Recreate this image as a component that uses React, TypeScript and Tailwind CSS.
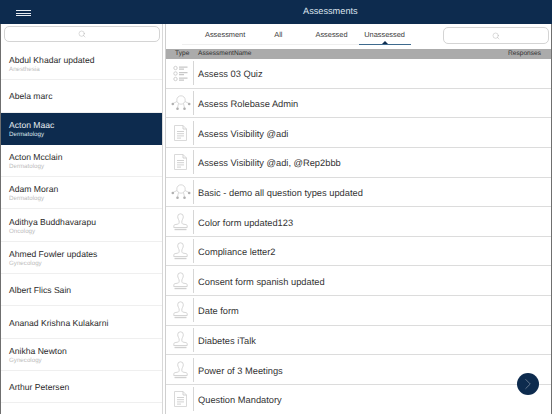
import { Search, ChevronRight } from 'lucide-react';

const people = [
  { name: 'Abdul Khadar updated', dept: 'Anesthesia' },
  { name: 'Abela marc' },
  { name: 'Acton Maac', dept: 'Dermatology', active: true },
  { name: 'Acton Mcclain', dept: 'Dermatology' },
  { name: 'Adam Moran', dept: 'Dermatology' },
  { name: 'Adithya Buddhavarapu', dept: 'Oncology' },
  { name: 'Ahmed Fowler updates', dept: 'Gynecology' },
  { name: 'Albert Flics Sain' },
  { name: 'Ananad Krishna Kulakarni' },
  { name: 'Anikha Newton', dept: 'Gynecology' },
  { name: 'Arthur Petersen' },
];

type Kind = 'quiz' | 'flow' | 'doc' | 'stamp';

const rows: { name: string; kind: Kind }[] = [
  { name: 'Assess 03 Quiz', kind: 'quiz' },
  { name: 'Assess Rolebase Admin', kind: 'flow' },
  { name: 'Assess Visibility @adi', kind: 'doc' },
  { name: 'Assess Visibility @adi, @Rep2bbb', kind: 'doc' },
  { name: 'Basic - demo all question types updated', kind: 'flow' },
  { name: 'Color form updated123', kind: 'stamp' },
  { name: 'Compliance letter2', kind: 'stamp' },
  { name: 'Consent form spanish updated', kind: 'stamp' },
  { name: 'Date form', kind: 'stamp' },
  { name: 'Diabetes iTalk', kind: 'stamp' },
  { name: 'Power of 3 Meetings', kind: 'stamp' },
  { name: 'Question Mandatory', kind: 'doc' },
];

function TypeIcon({ kind }: { kind: Kind }) {
  if (kind === 'quiz') {
    return (
      <svg width="15" height="17" viewBox="0 0 15 17" fill="none" stroke="#cfcfcf" strokeWidth="1">
        <circle cx="2.500" cy="3" r="1.700" />
        <circle cx="2.500" cy="8.500" r="1.700" />
        <circle cx="2.500" cy="14" r="1.700" />
        <path d="M6 2.200h8.500M6 4.200h5M6 7.700h8.500M6 9.700h5M6 13.200h8.500M6 15.200h5" strokeWidth="1.300" stroke="#c8c8c8" />
      </svg>
    );
  }
  if (kind === 'flow') {
    return (
      <svg width="20" height="16" viewBox="0 0 20 16" fill="none" stroke="#cfcfcf" strokeWidth="0.8">
        <circle cx="10" cy="5" r="4.200" />
        <path d="M6 6.500 2 8.500M14 6.500l4 2M7.500 8.500 6.500 13M12.500 8.500l1 4.500" />
        <circle cx="1.800" cy="9" r="1.300" fill="#b0b0b0" stroke="none" />
        <circle cx="18.200" cy="9" r="1.300" fill="#b0b0b0" stroke="none" />
        <circle cx="6.500" cy="13.700" r="1.300" fill="#b0b0b0" stroke="none" />
        <circle cx="13.500" cy="13.700" r="1.300" fill="#b0b0b0" stroke="none" />
      </svg>
    );
  }
  if (kind === 'doc') {
    return (
      <svg width="13" height="16" viewBox="0 0 13 16" fill="none" stroke="#d6d6d6" strokeWidth="0.9">
        <path d="M.5.500h8.500l3.500 3.500v11.500H.500z" />
        <path d="M9 .500V4h3.500M3 6.500h7M3 8.700h7M3 10.900h7M3 13.100h4" stroke="#cdcdcd" />
      </svg>
    );
  }
  return (
    <svg width="15" height="18" viewBox="0 0 15 18" fill="none" stroke="#d0d0d0" strokeWidth="0.9">
      <path d="M7.500.800a2.800 2.800 0 0 0-2.800 2.800c0 2.300 1.500 3.200 1.500 5.400 0 1.300-.4 1.900-1.300 2.100l-2.800.500c-1 .2-1.300.7-1.300 1.500v1.400h13.400v-1.400c0-.8-.3-1.300-1.300-1.500l-2.800-.500c-.9-.2-1.300-.8-1.300-2.100 0-2.200 1.500-3.100 1.500-5.400a2.800 2.800 0 0 0-2.800-2.800z" />
      <path d="M1.500 16.500h12" strokeWidth="1.400" />
    </svg>
  );
}

function SearchBox({ className }: { className: string }) {
  return (
    <div className={`flex items-center justify-center rounded-[5px] border border-[#d4d4d4] bg-white ${className}`}>
      <Search size={8} strokeWidth={1.200} className="text-[#a6a6a6]" />
    </div>
  );
}

export default function App() {
  return (
    <div className="relative h-[414px] w-[552px] overflow-hidden bg-white text-[#2b2b2b] [font-family:'Liberation_Sans',Arial,sans-serif] [text-rendering:geometricPrecision]">
      <header className="relative flex h-6 items-center bg-[#0d2b4e]">
        <div className="absolute left-4 top-[10px] flex w-[15px] flex-col gap-[1.500px]">
          <span className="h-px bg-[#e8edf2]" />
          <span className="h-px bg-[#e8edf2]" />
          <span className="h-px bg-[#e8edf2]" />
        </div>
        <h1 className="ml-[303px] text-[9.200px] font-normal text-[#dfe6ee]">Assessments</h1>
      </header>

      <div className="flex h-[390px] border-x border-[#6f6f6f]">
        <aside className="flex w-[161px] shrink-0 flex-col overflow-hidden">
          <div className="h-6 shrink-0 pl-[3px] pr-[2px] pt-[2px]">
            <SearchBox className="h-4" />
          </div>
          {people.map((p) => (
            <div
              key={p.name}
              className={`flex h-[32.300px] shrink-0 flex-col justify-center border-b pl-2 ${
                p.active ? 'border-[#0d2b4e] bg-[#0d2b4e] text-[#e6ebf1]' : 'border-[#efefef]'
              }`}
            >
              <p className="translate-y-px text-[8.600px] leading-[11px]">{p.name}</p>
              {p.dept && (
                <p className={`translate-y-px text-[6.200px] leading-[8px] ${p.active ? 'text-[#dbe2ea]' : 'text-[#bdbdbd]'}`}>{p.dept}</p>
              )}
            </div>
          ))}
        </aside>

        <main className="min-w-0 flex-1 border-l border-[#d8d8d8] pl-[2px]">
          <div className="flex h-full flex-col border-l border-[#cfcfcf]">
            <div className="flex h-[25px] shrink-0 items-start">
              <nav className="ml-[16px] flex h-[21px] w-[229px] border-b border-[#efefef] text-[7.400px] text-[#3a3a3a]">
                <span className="ml-[23px] mt-[6px] leading-[9px]">Assessment</span>
                <span className="ml-[29px] mt-[6px] leading-[9px]">All</span>
                <span className="ml-[33px] mt-[6px] leading-[9px]">Assessed</span>
                <span className="relative ml-[11px] h-[21px] w-[52px] shrink-0 border-b border-[#3e6a8e] pt-[6px] text-center leading-[9px]">
                  Unassessed
                  <span className="absolute bottom-0 left-1/2 h-0 w-0 -translate-x-1/2 border-x-[3px] border-b-[3px] border-x-transparent border-b-[#0d2b4e]" />
                </span>
              </nav>
              <SearchBox className="ml-auto mr-[2px] mt-[3px] h-[17px] w-[106px]" />
            </div>

            <div className="flex h-[10px] shrink-0 items-center bg-[#ababab] text-[6.600px] text-[#2f2f2f]">
              <span className="ml-[9px] w-[23px]">Type</span>
              <span>AssessmentName</span>
              <span className="ml-auto mr-[10px]">Responses</span>
            </div>

            {rows.map((r) => (
              <div key={r.name} className="flex h-[29.650px] shrink-0 items-center border-b border-[#dcdcdc]">
                <div className="flex w-[27px] shrink-0 justify-center pl-[2px]">
                  <TypeIcon kind={r.kind} />
                </div>
                <span className="h-[24px] w-px shrink-0 bg-[#d6d6d6]" />
                <span className="ml-[4px] translate-y-[1.500px] text-[9.300px] text-[#333333]">{r.name}</span>
              </div>
            ))}
          </div>
        </main>
      </div>

      <button className="absolute left-[517px] top-[373px] flex h-[22px] w-[22px] items-center justify-center rounded-full bg-[#0d2b4e]">
        <ChevronRight size={18} strokeWidth={1} className="text-[#7f8ea0]" />
      </button>
    </div>
  );
}
